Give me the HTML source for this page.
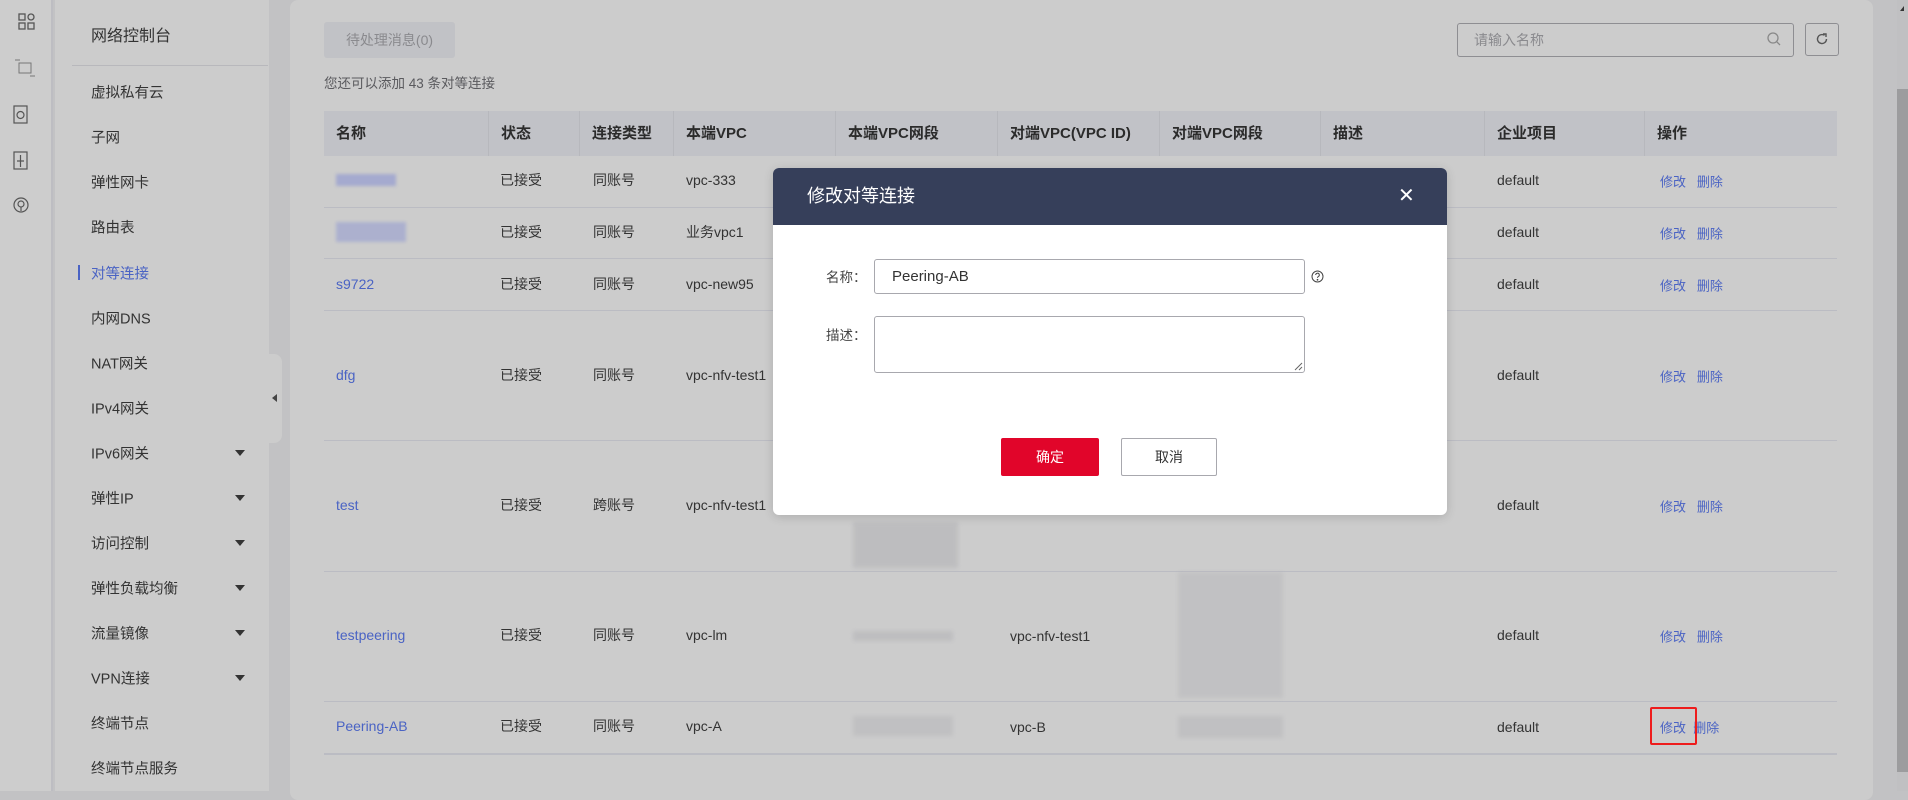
<!DOCTYPE html>
<html><head><meta charset="utf-8"><style>
*{margin:0;padding:0;box-sizing:border-box}
body{width:1908px;height:791px;overflow:hidden;background:#c2c2c4;font-family:"Liberation Sans","Noto Sans CJK SC",sans-serif;color:#2e2e2e;position:relative;font-size:14px}
.a{position:absolute}
.rail{left:0;top:0;width:53px;height:791px;background:#cdcdcd;border-right:2px solid #bdbdc2}
.side{left:55px;top:0;width:214px;height:791px;background:#cccccc}
.mi{position:absolute;left:36px;font-size:14.5px;color:#333;transform:translateY(-50%)}
.arr{position:absolute;left:180px;width:0;height:0;border-left:5px solid transparent;border-right:5px solid transparent;border-top:6px solid #333}
.panel{left:290px;top:0;width:1583px;height:800px;background:#cccccc;border-radius:8px}
.th{position:absolute;top:111px;height:45px;line-height:45px;font-weight:bold;font-size:15px;color:#2b2b2b;padding-left:12px;background:#c1c2c7;border-right:1px solid #b7b8bd}
.hl{position:absolute;left:324px;width:1513px;height:1px;background:#bbbcc3}
.c{position:absolute;transform:translateY(-50%);font-size:14px;color:#333;white-space:nowrap}
.lk{color:#4a63c4}
.blur{position:absolute;background:#b2b2b6;filter:blur(2px);opacity:.55}
.blu{position:absolute;background:#a5aacf;filter:blur(1.5px)}
</style></head><body>
<div class="a rail"></div>
<svg class="a" style="left:18px;top:13px" width="18" height="18" viewBox="0 0 18 18" fill="none" stroke="#555" stroke-width="1.3"><rect x="1" y="1" width="6" height="6"/><rect x="1" y="10" width="6" height="6"/><rect x="10" y="10" width="6" height="6"/><circle cx="13" cy="4" r="3"/></svg>
<svg class="a" style="left:14px;top:58px" width="22" height="20" viewBox="0 0 22 20" fill="none" stroke="#777" stroke-width="1"><rect x="5" y="5" width="12" height="10"/><path d="M1 2h5M16 18h5"/></svg>
<svg class="a" style="left:13px;top:105px" width="16" height="20" viewBox="0 0 16 20" fill="none" stroke="#555" stroke-width="1.2"><rect x="1" y="1" width="13" height="17"/><circle cx="7.5" cy="10" r="3.5"/></svg>
<svg class="a" style="left:13px;top:151px" width="16" height="20" viewBox="0 0 16 20" fill="none" stroke="#555" stroke-width="1.2"><rect x="1" y="1" width="13" height="17"/><path d="M4 10h7M7.5 4v12"/></svg>
<svg class="a" style="left:13px;top:196px" width="16" height="18" viewBox="0 0 16 18" fill="none" stroke="#555" stroke-width="1.2"><circle cx="8" cy="9" r="7"/><circle cx="8" cy="8" r="3"/><path d="M8 11v4"/></svg>

<div class="a side">
<div class="mi" style="top:34px;font-size:16px">网络控制台</div>
<div style="position:absolute;left:17px;top:65px;width:196px;height:1px;background:#b8b8bc"></div>
<div class="mi" style="top:92px">虚拟私有云</div>
<div class="mi" style="top:137px">子网</div>
<div class="mi" style="top:182px">弹性网卡</div>
<div class="mi" style="top:227px">路由表</div>
<div style="position:absolute;left:23px;top:265px;width:2px;height:15px;background:#4a63c4"></div>
<div class="mi" style="top:273px;color:#4a63c4">对等连接</div>
<div class="mi" style="top:318px">内网DNS</div>
<div class="mi" style="top:363px">NAT网关</div>
<div class="mi" style="top:408px">IPv4网关</div>
<div class="mi" style="top:453px">IPv6网关</div><div class="arr" style="top:450px"></div>
<div class="mi" style="top:498px">弹性IP</div><div class="arr" style="top:495px"></div>
<div class="mi" style="top:543px">访问控制</div><div class="arr" style="top:540px"></div>
<div class="mi" style="top:588px">弹性负载均衡</div><div class="arr" style="top:585px"></div>
<div class="mi" style="top:633px">流量镜像</div><div class="arr" style="top:630px"></div>
<div class="mi" style="top:678px">VPN连接</div><div class="arr" style="top:675px"></div>
<div class="mi" style="top:723px">终端节点</div>
<div class="mi" style="top:768px">终端节点服务</div>
</div>
<div class="a" style="left:262px;top:354px;width:20px;height:89px;background:#cccccc;border-radius:0 8px 8px 0"></div>
<div class="a" style="left:272px;top:394px;width:0;height:0;border-top:4px solid transparent;border-bottom:4px solid transparent;border-right:5px solid #444"></div>

<div class="a panel"></div>
<div class="a" style="left:1897px;top:0;width:11px;height:791px;background:#c0c0c2"></div>
<div class="a" style="left:1897px;top:89px;width:11px;height:683px;background:#9c9c9e"></div>
<div class="a" style="left:1900px;top:6px;width:0;height:0;border-left:4px solid transparent;border-bottom:5px solid #333"></div>

<div class="a" style="left:324px;top:22px;width:131px;height:36px;background:#c1c2c6;border-radius:3px;text-align:center;line-height:36px;color:#8a8a8e;font-size:14px">待处理消息(0)</div>
<div class="a" style="left:324px;top:72px;font-size:13.5px;color:#5a5a5e">您还可以添加 43 条对等连接</div>
<div class="a" style="left:1457px;top:23px;width:337px;height:34px;border:1px solid #8e8e92;border-radius:3px"></div>
<div class="a" style="left:1474px;top:30px;font-size:14px;color:#8a8a8e">请输入名称</div>
<svg class="a" style="left:1767px;top:32px" width="14" height="14" viewBox="0 0 14 14" fill="none" stroke="#888" stroke-width="1.3"><circle cx="6" cy="6" r="5"/><path d="M10 10l3 3"/></svg>
<div class="a" style="left:1805px;top:23px;width:34px;height:33px;border:1px solid #8e8e92;border-radius:3px"></div>
<svg class="a" style="left:1816px;top:33px" width="12" height="12" viewBox="0 0 12 12" fill="none" stroke="#555" stroke-width="1.4"><path d="M10.5 6A4.5 4.5 0 1 1 8.5 2.3"/><path d="M7 1h3v3" /></svg>

<div class="th" style="left:324px;width:165px">名称</div>
<div class="th" style="left:489px;width:91px">状态</div>
<div class="th" style="left:580px;width:94px">连接类型</div>
<div class="th" style="left:674px;width:162px">本端VPC</div>
<div class="th" style="left:836px;width:162px">本端VPC网段</div>
<div class="th" style="left:998px;width:162px">对端VPC(VPC ID)</div>
<div class="th" style="left:1160px;width:161px">对端VPC网段</div>
<div class="th" style="left:1321px;width:164px">描述</div>
<div class="th" style="left:1485px;width:160px">企业项目</div>
<div class="th" style="left:1645px;width:192px;border-right:none">操作</div>

<div class="hl" style="top:207px"></div><div class="hl" style="top:258px"></div><div class="hl" style="top:310px"></div><div class="hl" style="top:440px"></div><div class="hl" style="top:571px"></div><div class="hl" style="top:701px"></div><div class="hl" style="top:753px;height:2px"></div>

<div class="blu" style="left:336px;top:174px;width:60px;height:12px"></div>
<div class="blu" style="left:336px;top:222px;width:70px;height:20px;opacity:.8"></div>
<div class="c lk" style="left:336px;top:284px">s9722</div>
<div class="c lk" style="left:336px;top:375px">dfg</div>
<div class="c lk" style="left:336px;top:505px">test</div>
<div class="c lk" style="left:336px;top:635px">testpeering</div>
<div class="c lk" style="left:336px;top:726px">Peering-AB</div>

<div class="c" style="left:500px;top:180px">已接受</div><div class="c" style="left:593px;top:180px">同账号</div><div class="c" style="left:686px;top:180px">vpc-333</div>
<div class="c" style="left:500px;top:232px">已接受</div><div class="c" style="left:593px;top:232px">同账号</div><div class="c" style="left:686px;top:232px">业务vpc1</div>
<div class="c" style="left:500px;top:284px">已接受</div><div class="c" style="left:593px;top:284px">同账号</div><div class="c" style="left:686px;top:284px">vpc-new95</div>
<div class="c" style="left:500px;top:375px">已接受</div><div class="c" style="left:593px;top:375px">同账号</div><div class="c" style="left:686px;top:375px">vpc-nfv-test1</div>
<div class="c" style="left:500px;top:505px">已接受</div><div class="c" style="left:593px;top:505px">跨账号</div><div class="c" style="left:686px;top:505px">vpc-nfv-test1</div>
<div class="c" style="left:500px;top:635px">已接受</div><div class="c" style="left:593px;top:635px">同账号</div><div class="c" style="left:686px;top:635px">vpc-lm</div>
<div class="c" style="left:500px;top:726px">已接受</div><div class="c" style="left:593px;top:726px">同账号</div><div class="c" style="left:686px;top:726px">vpc-A</div>

<div class="blur" style="left:853px;top:522px;width:105px;height:46px"></div>
<div class="blur" style="left:853px;top:631px;width:100px;height:10px"></div>
<div class="c" style="left:1010px;top:636px">vpc-nfv-test1</div>
<div class="blur" style="left:1178px;top:572px;width:105px;height:126px;opacity:.4"></div>
<div class="blur" style="left:853px;top:716px;width:100px;height:20px;opacity:.45"></div>
<div class="c" style="left:1010px;top:727px">vpc-B</div>
<div class="blur" style="left:1178px;top:716px;width:105px;height:22px;opacity:.45"></div>

<div class="c" style="left:1497px;top:180px">default</div><div class="c" style="left:1497px;top:232px">default</div><div class="c" style="left:1497px;top:284px">default</div><div class="c" style="left:1497px;top:375px">default</div><div class="c" style="left:1497px;top:505px">default</div><div class="c" style="left:1497px;top:635px">default</div><div class="c" style="left:1497px;top:727px">default</div>
<div class="c lk" style="left:1660px;top:181px;font-size:13px">修改&nbsp;&nbsp;&nbsp;删除</div>
<div class="c lk" style="left:1660px;top:233px;font-size:13px">修改&nbsp;&nbsp;&nbsp;删除</div>
<div class="c lk" style="left:1660px;top:285px;font-size:13px">修改&nbsp;&nbsp;&nbsp;删除</div>
<div class="c lk" style="left:1660px;top:376px;font-size:13px">修改&nbsp;&nbsp;&nbsp;删除</div>
<div class="c lk" style="left:1660px;top:506px;font-size:13px">修改&nbsp;&nbsp;&nbsp;删除</div>
<div class="c lk" style="left:1660px;top:636px;font-size:13px">修改&nbsp;&nbsp;&nbsp;删除</div>
<div class="c lk" style="left:1660px;top:727px;font-size:13px">修改&nbsp;&nbsp;删除</div>
<div class="a" style="left:1650px;top:707px;width:47px;height:38px;border:2.5px solid #ee1c1c;border-radius:2px"></div>

<div class="a" style="left:773px;top:168px;width:674px;height:347px;background:#fff;border-radius:6px;overflow:hidden;box-shadow:0 2px 10px rgba(0,0,0,.15)">
<div style="height:57px;background:#363f5a;color:#fff;font-size:18px;line-height:57px;padding-left:34px">修改对等连接</div>
<div style="position:absolute;left:625px;top:18px;color:#fff;font-size:20px;line-height:20px">✕</div>
<div style="position:absolute;left:53px;top:98px;font-size:13.5px;color:#444">名称：</div>
<div style="position:absolute;left:101px;top:91px;width:431px;height:35px;border:1px solid #a8a8ae;border-radius:3px;padding-left:17px;line-height:33px;font-size:15px;color:#333">Peering-AB</div>
<svg style="position:absolute;left:538px;top:102px" width="13" height="13" viewBox="0 0 13 13" fill="none" stroke="#444" stroke-width="1"><circle cx="6.5" cy="6.5" r="5.5"/><path d="M4.7 5a1.8 1.8 0 1 1 2.6 1.6c-.6.3-.8.7-.8 1.3"/><circle cx="6.5" cy="9.8" r=".4" fill="#444"/></svg>
<div style="position:absolute;left:53px;top:156px;font-size:13.5px;color:#444">描述：</div>
<div style="position:absolute;left:101px;top:148px;width:431px;height:57px;border:1px solid #a8a8ae;border-radius:3px"></div>
<svg style="position:absolute;left:521px;top:194px" width="9" height="9" viewBox="0 0 9 9" stroke="#666" stroke-width="1"><path d="M1 8L8 1M5 8L8 5"/></svg>
<div style="position:absolute;left:228px;top:270px;width:98px;height:38px;background:#e1052a;border-radius:2px;color:#fff;text-align:center;line-height:38px;font-size:14px">确定</div>
<div style="position:absolute;left:348px;top:270px;width:96px;height:38px;border:1px solid #a8a8ae;border-radius:2px;color:#333;text-align:center;line-height:36px;font-size:14px">取消</div>
</div>
</body></html>
